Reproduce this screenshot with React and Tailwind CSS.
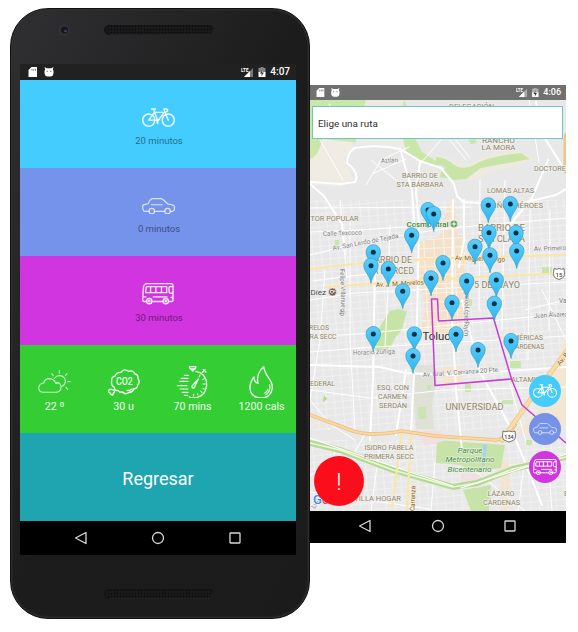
import React from "react";

const FONT = "font-[Roboto,'Noto_Sans',sans-serif]";

function Bike({ className }) {
  return (
    <svg viewBox="0 0 98 57" className={className} fill="none" stroke="currentColor" strokeWidth="4.300" strokeLinecap="round" strokeLinejoin="round">
      <circle cx="20" cy="36" r="18" />
      <circle cx="78" cy="36" r="18" />
      <path d="M28 3h12M34 3l13 36M37 13h29M37 13L20 36h26M66 13L46 40M78 36L65 3h9q5 4-1 8" />
      <path d="M46 36v9" strokeWidth="6" />
    </svg>
  );
}

function Car({ className }) {
  return (
    <svg viewBox="0 0 98 49" className={className} fill="none" stroke="currentColor" strokeWidth="3.600" strokeLinecap="round" strokeLinejoin="round">
      <path d="M20 40H8Q3 40 2 25q0-5 7-6l9-2 6-11q3-4 8-4h23q5 0 9 4l13 12q15 1 18 5 3 8 0 13-1 4-5 4h-5M38 40h29M28 20h32" />
      <circle cx="29" cy="39" r="8" />
      <circle cx="76" cy="39" r="8" />
    </svg>
  );
}

function Bus({ className }) {
  return (
    <svg viewBox="0 0 97 66" className={className} fill="none" stroke="currentColor" strokeWidth="4" strokeLinecap="round" strokeLinejoin="round">
      <path d="M14 56H6q-4 0-4-6l2-34Q5 2 16 2h72q6 0 6 6v44q0 4-4 4h-8M31 56h32M4 42h8M34 42h42M88 44h5" />
      <path d="M16 11h59v18H11l1-14q1-4 4-4zM26 11v18M42 11v18M59 11v18M93 11h-8q-3 0-3 4v10q0 6 5 6h6" />
      <circle cx="22" cy="55" r="8" />
      <circle cx="22" cy="55" r="2" />
      <circle cx="72" cy="55" r="8" />
      <circle cx="72" cy="55" r="2" />
    </svg>
  );
}

function Weather() {
  return (
    <svg viewBox="0 0 98 70" className="h-[23.3px] w-[32.7px] opacity-75" fill="none" stroke="currentColor" strokeWidth="3.400" strokeLinecap="round">
      <path d="M17 67q-15-1-15-14 1-12 15-14 3-13 17-13 13 1 18 11 14-1 17 12 1 16-14 18z" />
      <path d="M49 25q7-9 18-8 15 3 15 18-1 10-12 15M53 41q4-3 8-2" />
      <path d="M64 2v8M41 11l5 6M87 11l-5 6M89 35h8M84 52l5 6" />
    </svg>
  );
}

function Carbon() {
  return (
    <svg viewBox="0 0 98 84" className="h-[28px] w-[32.7px]" fill="none" stroke="currentColor" strokeWidth="4" strokeLinecap="round" strokeLinejoin="round">
      <path d="M22 58q-11-5-8-18-2-13 10-16 5-12 18-11 10-13 22-3 14-5 20 8 10 2 9 14 8 9-1 18 0 12-13 13-4 11-14 11-11 7-18-2-9 3-14-5-11 3-11-9z" />
      <path d="M60 67q9 2 14-4M66 73q12-1 14-9" />
      <path d="M5 67q5-5 10-2 10 0 7 8-4 3-5 8-8-2-8-7-6-1-4-7z" />
      <text x="52" y="50" textAnchor="middle" textLength="50" lengthAdjust="spacingAndGlyphs" fontSize="33" fontWeight="500" stroke="none" fill="currentColor">CO2</text>
    </svg>
  );
}

function Stopwatch() {
  return (
    <svg viewBox="0 0 92 98" className="h-[32.7px] w-[30.7px]" fill="none" stroke="currentColor" strokeWidth="4" strokeLinecap="round" strokeLinejoin="round">
      <path d="M57 16q31 6 32 39-2 38-39 41-8 0-13-3" />
      <path d="M37 2h20l-3 7H40zM43 10l4 5 5-5M76 19l8-7M79 11l8 7" />
      <path d="M22 28h12M12 37h21M8 46h25M2 59h28M9 69h24M16 79h17M22 88h10" strokeWidth="3.400" />
      <path d="M44 61l20-22-13 27q-6 1-7-5z" />
      <path d="M69 27l-3 5M84 54h-6M75 79l-4-4M50 90v-5M82 38l-5 3M83 70l-5-3M63 87l-2-4" strokeWidth="3" />
    </svg>
  );
}

function Flame() {
  return (
    <svg viewBox="0 0 74 98" className="h-[32.7px] w-[24.7px]" fill="none" stroke="currentColor" strokeWidth="4" strokeLinecap="round" strokeLinejoin="round">
      <path d="M44 2C48 34 72 40 70 66 67 86 55 96 36 96 17 96 3 84 3 65 3 49 8 42 15 33 14 44 19 49 27 52 22 31 31 12 44 2z" />
      <path d="M62 56q4 21-12 30M56 70q-2 9-9 11" strokeWidth="3.400" />
    </svg>
  );
}

function StatusBar({ time, className, timeClass, iconClass, signalClass }) {
  return (
    <div className={`flex items-center text-white ${className}`}>
      <svg viewBox="0 0 26 12" className={iconClass} fill="currentColor">
        <path d="M3.500 1H9v10H.5V4z" />
        <path d="M4 2.800v2M5.800 2.800v2M7.500 2.800v2" stroke="#555" strokeWidth=".7" />
        <path d="M17.200 3.500L16.500 1l2.200 1.200h4.600L25.500 1l-.7 2.500q1.200 1 .7 3.500-.4 3.500-3 3.500h-3q-2.500 0-3-3.500-.4-2.500.7-3.500z" />
        <path d="M18.700 5.300h1M22.300 5.300h1" stroke="#444" strokeWidth="1" />
      </svg>
      <div className="grow" />
      <svg viewBox="0 0 25 12" className={signalClass} fill="currentColor">
        <path d="M12 2v9H3z" opacity=".4" />
        <path d="M9 5v6H3z" />
        <text x="0" y="5.500" fontSize="5.500" fontWeight="700" textLength="7.500" lengthAdjust="spacingAndGlyphs">LTE</text>
        <path d="M17.500 2H19.500V1h3v1H24.500v5h-7z" opacity=".45" />
        <path d="M17.500 6h2l2-1.500v1.500h3v5h-7z" />
        <path d="M21.500 3.500l-2.500 4h1.800L20.300 10.500l2.500-4h-1.800z" fill="#333" />
      </svg>
      <span className={`font-medium leading-none ${timeClass}`}>{time}</span>
    </div>
  );
}

function NavBar({ className }) {
  return (
    <div className={`flex items-center justify-between bg-black text-[#d8d8d8] ${className}`}>
      <svg viewBox="0 0 14 14" className="size-[14px]" fill="none" stroke="currentColor" strokeWidth="1.300" strokeLinejoin="round"><path d="M12 1.500v11L1.500 7z" /></svg>
      <svg viewBox="0 0 14 14" className="size-[14px]" fill="none" stroke="currentColor" strokeWidth="1.300"><circle cx="7" cy="7" r="5.500" /></svg>
      <svg viewBox="0 0 14 14" className="size-[14px]" fill="none" stroke="currentColor" strokeWidth="1.300"><rect x="2" y="2" width="10" height="10" rx=".5" /></svg>
    </div>
  );
}

function Speaker() {
  return (
    <svg viewBox="0 0 110 10" className="h-[10px] w-[110px]">
      <defs>
        <pattern id="mesh" width="3" height="3" patternUnits="userSpaceOnUse">
          <rect width="3" height="3" fill="#1b1b1b" />
          <circle cx="1.500" cy="1.500" r=".9" fill="#0c0c0c" />
        </pattern>
      </defs>
      <rect x=".5" y=".5" width="109" height="9" rx="4.500" fill="url(#mesh)" stroke="#141414" />
      <path d="M6 9.700h98q5-1 5.500-5" fill="none" stroke="#3a3a3a" strokeWidth=".5" />
    </svg>
  );
}

function Mode({ color, icon, label }) {
  return (
    <div className={`flex h-[88px] flex-col items-center justify-end pb-[21px] ${color}`}>
      {icon}
      <span className="mt-[8px] pl-[2px] text-[9.500px] leading-[12px] text-black/50">{label}</span>
    </div>
  );
}

function Stat({ icon, label }) {
  return (
    <div className="flex w-1/4 flex-col items-center text-[#f0fff0]">
      <div className="flex h-[34px] items-center justify-center">{icon}</div>
      <span className="mt-px text-[10.700px] leading-[14px]">{label}</span>
    </div>
  );
}

const pins = [
  [428, 210], [433.7, 214], [510.3, 204], [488.3, 205.3], [489, 232.7], [516, 233], [411.7, 235.300],
  [475, 246.700], [516.7, 251], [373.3, 252.300], [490, 255.300], [443, 263], [371, 265.700], [388.3, 269],
  [431, 278.300], [496.3, 280], [466.7, 281], [402.7, 291.300], [452, 302.700], [494.3, 303.700],
  [373.3, 334], [414.3, 334.300], [456, 334.300], [511, 341], [478, 350], [413, 356],
];

const places = [
  ["DELEGACIÓN", 449, 109, 45], ["RANCHO", 482, 142.500, 33], ["LA MORA", 481.500, 150.300, 34],
  ["DOCTORES", 534, 170.500, 36], ["BARRIO DE", 402, 178, 36], ["STA BÁRBARA", 396.500, 187, 47],
  ["LOMAS ALTAS", 487, 193, 47], ["NIÑOS HÉROES", 489, 207.500, 54], ["TOR POPULAR", 310.500, 221, 48],
  ["RELOS", 309, 330, 20], ["RA SECC", 309.500, 338.700, 27], ["EDERAL", 310, 386, 25],
  ["ESQ. CON", 377, 390.300, 32], ["CARMEN", 378, 399, 29], ["SERDÁN", 379, 407.700, 28],
  ["MÉRICAS", 513, 340, 30], ["CÁRDENAS", 511, 348.500, 33], ["ALTAMIRANO", 511, 381.500, 44],
  ["ISIDRO FABELA", 364.500, 450, 49], ["PRIMERA SECC", 364, 458.700, 50], ["VILLA HOGAR", 354, 500.500, 47],
  ["LÁZARO", 487.500, 496, 27], ["CÁRDENAS", 483, 504.700, 37], ["E", 564, 496, 4],
];

const bigPlaces = [
  ["BARRIO DE", 478, 230.500, 47], ["STA CLARA", 478, 241.500, 47], ["BARRIO DE", 369, 262.500, 43],
  ["LA MERCED", 368, 273.500, 46], ["5 DE MAYO", 474, 288, 46], ["UNIVERSIDAD", 445.500, 409.500, 58],
];

function CityMap() {
  return (
    <svg viewBox="310 100 256 411" className="block h-[411px] w-[256px]">
      <defs>
        <pattern id="blocks" width="17" height="13" patternUnits="userSpaceOnUse" patternTransform="rotate(-5)">
          <path d="M0 .5h17M0 7h17M.5 0v13M9 0v13" stroke="#f4f4f4" strokeWidth=".7" />
        </pattern>
        <pattern id="downtown" width="10" height="9" patternUnits="userSpaceOnUse" patternTransform="rotate(-3)">
          <path d="M0 .5h10M.5 0v9" stroke="#fbf2e6" strokeWidth="1" />
        </pattern>
        <linearGradient id="pin" x2="0" y2="1">
          <stop stopColor="#5ccdfa" />
          <stop offset="1" stopColor="#2ab6ef" />
        </linearGradient>
        <g id="marker">
          <path d="M0 17.500C-1.300 8.500-7.200 6.500-7.200-.4A7.200 7.200 0 0 1 7.200-.4C7.200 6.500 1.300 8.500 0 17.500z" fill="url(#pin)" stroke="#3c9cc4" strokeWidth=".7" />
          <circle r="2.500" fill="#07324a" />
        </g>
      </defs>
      <rect x="310" y="100" width="256" height="411" fill="#e8e8e8" />
      <path d="M310 200h256v230H310zM310 440h256v71H310z" fill="url(#blocks)" />
      <path d="M318 139h30l8 12-13 6 10 22-12 8-31-2V157z" fill="#f0ece3" />
      <path d="M310 100h94l5 10 30 20-29 12H354l-32-3q-3 17-12 20z" fill="#c9e7a8" />
      <path d="M366 100h38l-2 8h-38z" fill="#ece9e1" />
      <path d="M356 139h50l1 16-18-8-33-2z" fill="#ebebe8" />
      <path d="M403 139h12l7 13 14 9 9 3-9 2-15-5-15-10z" fill="#c9e7a8" />
      <path d="M436 153l19 7 10 5 26-11 30-3 14 9-21 7-23 4-19 10-19-2-3-5 2-5-16-9z" fill="#efeadf" />
      <path d="M436 157q9 0 18 8 8 6 20 0 15-9 47-12l9 6-22 4-27 5-15 11-12 1-14-3 1-5 5-4-10-5z" fill="#c8e4a6" />
      <path d="M468 140l7-1 2 4-6 1zM335 240h4v6h-4zM542 267h10v7h-10zM510 361h11v7h-11zM466 299h6v7h-6zM465 384h6v8h-6zM503 400h10v4h-13zM526 440h6v5h-6z" fill="#c9e5ab" />
      <path d="M390 311l8-2 9 2-3 11-3 9-6 7-4 8-7 6-8-1-5-2 5-8 3-13z" fill="#c7e4a7" />
      <path d="M418 243l10-4h8l7-8 4-26h8l3 30h5l-1 14 5 6-3 22 3 16-3 24-5 18-17-2-12 4-9-9 4-19-3-20-5-13z" fill="#f4e1cb" />
      <path d="M418 243l10-4h8l7-8 4-26h8l3 30h5l-1 14 5 6-3 22 3 16-3 24-5 18-17-2-12 4-9-9 4-19-3-20-5-13z" fill="url(#downtown)" />
      <path d="M414 365h20l3 15-5 24 2 25h-18l-2-28z" fill="#dfe0d6" />
      <path d="M418 407h8v12h-8zM427 385h4v5h-4z" fill="#cce3b4" />
      <path d="M438 368l23-2 2 17-18 5zM501 462h8v49h-8z" fill="#f4e4d0" />
      <path d="M566 335v88l-15 18-35-9 25-25z" fill="#f3e6d2" />
      <path d="M437 440l68 5-4 23-31 3-9-6-25-2zM463 490l28-5-2 26h-18z" fill="#c7e3a7" />
      <path d="M483 444l4 1-2 20-3 1z" fill="#a9d3ec" />
      <path d="M324 395l3 4-4 3z" fill="#aadd7c" />
      <path d="M417 431h24l3 10-19 5zM460 474h23l-5 14-16-2z" fill="#f1dfe2" />
      <g fill="none" stroke="#fff" strokeLinecap="round" strokeLinejoin="round">
        <path strokeWidth="2" d="M310 182l31 2 14-2q5-9-8-19 0-9 7-15 25-4 46 1l20 12 21 7 13 16 3 12 6 6 51 3 42-10 10-6M310 184l14 12 18 28 3 30M400 148l6 22 6 20 3 45M420 162l-4 30 3 32-2 96-3 55-3 56M310 365l70 2 25 6 45 2 116-8M406 370l-10 65M375 260l-2 120-3 60M453 200l-1 120 4 70 6 60M462 300l17 70 33 60 30 75M536 102l8 35 22 35M548 160l-16 38-27 33M464 200v40l-5 27" />
        <path strokeWidth="1" d="M310 255l60-15 80-12 116-10M310 232l50-2 75-5M313 281l36-5 30-3M310 300l45-7 211-11M310 337l60-4 200-20M310 352l65-5 191-11M310 390l60 8 75-8 121-3M325 270l-5 70-10 60M350 220v120l5 90M340 200l7 80M390 225l-2 65-3 57M480 180l-1 130M505 180l-3 150M530 210l-2 150M550 210l-1 120M310 400l20 24 25 16M310 475l45-23 10-18M335 448l-5 40M310 492l120 17M380 445l-9 66M435 462l-4 49M529 100l10 62M320 140l23 40M329 104l20 31M310 208l160-1M366 185l15-25 28-13M371 160l35 28M372 174l34-15M430 106l25 30M441 140l-22 25M450 140l16 20M456 140l14 18" />
        <path strokeWidth="1" d="M525 458l-7 53M548 458l4 53M475 471l50 40M510 384l16 58M542 290l24 50M525 310l41-10" />
      </g>
      <g fill="none" strokeLinecap="round">
        <path d="M310 443l30 7 53 20 60 17 24-4 36-14 53-12" stroke="#b5d991" strokeWidth="6" />
        <path d="M310 443l30 7 53 20 60 17 24-4 36-14 53-12" stroke="#edf8df" strokeWidth="1.500" />
        <path d="M310 438l40 14 60 20 43 14M461 488l105-34" stroke="#fff" strokeWidth="1.200" />
        <path d="M310 269l52-6 83-5 121-3M325 287l75-5 60-4 106-5M402 432l-10 75M411 433l-4 78" stroke="#fbe6a8" strokeWidth="2.200" />
        <path d="M566 135v37M310 415l43 16q18 6 49 0l33 5 61 4q10-1 19-15" stroke="#efbb78" strokeWidth="3.500" />
        <path d="M310 415l43 16q18 6 49 0l33 5 61 4q10-1 19-15" stroke="#f9d9a0" strokeWidth="2" />
        <path d="M502 440l31-44 34-45M566 140v30" stroke="#edc584" strokeWidth="5" />
        <path d="M502 440l31-44 34-45" stroke="#f7dda8" strokeWidth="3.500" />
      </g>
      <g fontSize="7.500" fill="#908466" stroke="#f1f1ef" strokeWidth="1.500" paintOrder="stroke">
        {places.map(([t, x, y, w]) => <text key={t + y} x={x} y={y} textLength={w} lengthAdjust="spacingAndGlyphs">{t}</text>)}
      </g>
      <g fontSize="9.500" fill="#908466" stroke="#f1f1ef" strokeWidth="1.500" paintOrder="stroke">
        {bigPlaces.map(([t, x, y, w]) => <text key={t + y} x={x} y={y} textLength={w} lengthAdjust="spacingAndGlyphs">{t}</text>)}
      </g>
      <g fontSize="6.500" fill="#7d7d7d" stroke="#f3f3f3" strokeWidth="1.200" paintOrder="stroke">
        <text x="381" y="163" textLength="17" transform="rotate(-3 381 163)">Aztlán</text>
        <text x="323" y="236" textLength="39" transform="rotate(-2 323 236)">Calle Texcoco</text>
        <text x="333" y="250.500" textLength="67" transform="rotate(-11 333 250.500)">Av. San Lerdo de Tejada</text>
        <text x="340" y="269" textLength="45" transform="rotate(88 340 269)">Felipe Villanueva</text>
        <text x="353" y="355" textLength="42" transform="rotate(-2 353 355)">Horacio Zúñiga</text>
        <text x="423" y="377" textLength="77" transform="rotate(-4 423 377)">Av. Gral. V. Carranza 20 Pte.</text>
        <text x="534" y="251" textLength="32" lengthAdjust="spacingAndGlyphs" transform="rotate(-2 534 251)">Av. Primero</text>
        <text x="534" y="318" textLength="34" transform="rotate(-3 534 318)">Juan Álvarez</text>
        <text x="559" y="303">Va</text>
        <text x="465" y="290" textLength="46" transform="rotate(91 465 290)">Ignacio López Rayón</text>
        <text x="344" y="316" transform="rotate(-90 344 316)">de</text>
        <text x="315" y="509" transform="rotate(-65 315 509)">Luis</text>
      </g>
      <g fontSize="6.500" fill="#805438" stroke="#fdf0cc" strokeWidth="1.200" paintOrder="stroke">
        <text x="455" y="260" textLength="50" transform="rotate(2 455 260)">Av. Miguel Hidalgo</text>
        <text x="376" y="287" textLength="48" transform="rotate(-3 376 287)">Av. J. M. Morelos</text>
        <text x="414.500" y="511" textLength="25" transform="rotate(-88 414.500 511)">Carranza</text>
        <text x="560" y="366" transform="rotate(-52 560 366)">Av. B</text>
      </g>
      <g fill="#3d8a37" stroke="#f4f4ec" strokeWidth="1.200" paintOrder="stroke">
        <text x="406.500" y="227" fontSize="8" fontWeight="500" textLength="42">Cosmovitral</text>
        <g fontSize="8" fontStyle="italic" textAnchor="middle">
          <text x="470" y="452.500" textLength="25" lengthAdjust="spacingAndGlyphs">Parque</text>
          <text x="470" y="462" textLength="49" lengthAdjust="spacingAndGlyphs">Metropolitano</text>
          <text x="469.500" y="471.500" textLength="44" lengthAdjust="spacingAndGlyphs">Bicentenario</text>
        </g>
      </g>
      <circle cx="454" cy="224" r="3.800" fill="#589b4f" stroke="#fff" strokeWidth=".6" />
      <path d="M454 221.500v5M451.500 224h5" stroke="#fff" />
      <text x="310.500" y="295" fontSize="8" fill="#444" stroke="#eee" strokeWidth="1" paintOrder="stroke" textLength="15.500">Díez</text>
      <circle cx="332.500" cy="292" r="4" fill="#7a5a50" stroke="#fff" strokeWidth=".6" />
      <path d="M330.500 290.500h3v2q-1.500 2-3 0zM334 291h1v1" fill="none" stroke="#fff" strokeWidth=".8" />
      <text x="422.500" y="340" fontSize="11" fill="#333" stroke="#f4ece0" strokeWidth="1.500" paintOrder="stroke" textLength="34" lengthAdjust="spacingAndGlyphs">Toluca</text>
      <g fontSize="6" fontWeight="500" textAnchor="middle">
        <path d="M554 268.500q2.500 1.500 5 0 2.500 1.500 5 0 1 6 0 8-1 1.500-5 3-4-1.500-5-3-1-2 0-8z" fill="#fff" stroke="#555" strokeWidth=".8" />
        <text x="559" y="276.500" fill="#444">15</text>
        <path d="M503 431q2.500 1.500 6 0 3.500 1.500 6 0 1 6 0 8-1 1.500-6 3-5-1.500-6-3-1-2 0-8z" fill="#fff" stroke="#555" strokeWidth=".8" />
        <text x="509" y="438.500" fill="#444" fontSize="5.500">134</text>
      </g>
      <path d="M438.500 321l-1-22h-6l3.500 86.500 76.500-6.500-18-61-55 3M511.500 379l10.500 26 44 38" fill="none" stroke="#c83bd6" strokeWidth="1.500" strokeLinejoin="round" />
      {pins.map(([x, y]) => <use key={`${x}-${y}`} href="#marker" x={x} y={y} />)}
      <text x="313" y="504" fontSize="13" fontWeight="500" fill="#4285f4" stroke="#fff" strokeWidth="1.500" paintOrder="stroke">G</text>
      <text x="322" y="504" fontSize="12" fill="#ea4335">o</text>
    </svg>
  );
}

function MapPhone() {
  return (
    <section className="mt-[85px] flex h-[458px] w-[256px] flex-col">
      <StatusBar time="4:06" className="h-[15px] bg-[#707070] pr-[5px] pl-[6px]" timeClass="text-[9px] ml-[4px]" iconClass="h-[11px] w-[24px]" signalClass="h-[11px] w-[23px]" />
      <div className="relative h-[411px]">
        <CityMap />
        <div className="absolute top-[6px] left-[2px] flex h-[33px] w-[251px] items-center border border-[#6fc4c5] bg-white pt-[3px] pl-[5px] text-[9.900px] text-[#303030]">Elige una ruta</div>
        <div className="absolute right-[5px] bottom-[28px] flex flex-col gap-[6px] text-white">
          <button className="flex size-[32px] items-center justify-center rounded-full bg-[#44ccff]"><Bike className="w-[24px]" /></button>
          <button className="flex size-[32px] items-center justify-center rounded-full bg-[#7592e9]"><Car className="w-[24px] opacity-75" /></button>
          <button className="flex size-[32px] items-center justify-center rounded-full bg-[#d035e0]"><Bus className="w-[24px]" /></button>
        </div>
        <button className="absolute bottom-[5px] left-[4px] flex size-[50px] items-center justify-center rounded-full bg-[#fc0d1b] pt-[2px] text-[24px] leading-none font-light text-white">!</button>
      </div>
      <NavBar className="h-[32px] pr-[49px] pl-[48px] pb-[2px]" />
    </section>
  );
}

function TripPhone() {
  return (
    <section className="mt-[8px] ml-[10px] flex h-[611px] w-[300px] flex-col rounded-[38px] border border-[#111] bg-linear-to-br from-[#302f31] via-[#1d1c1d] to-[#1b1b1b] pl-[9px] shadow-[inset_0_0_2px_1px_#333333]">
      <div className="flex h-[55px] items-start">
        <svg viewBox="0 0 14 14" className="mt-[14px] ml-[37px] size-[14px]">
          <circle cx="7" cy="7" r="5.500" fill="#343236" />
          <circle cx="7.500" cy="7" r="3.500" fill="#171520" />
          <circle cx="8.500" cy="8" r="1.300" fill="#51425b" />
        </svg>
        <div className="mt-[16px] ml-[33px]"><Speaker /></div>
      </div>
      <div className="w-[276px]">
        <StatusBar time="4:07" className="h-[16px] bg-[#212121] pr-[6px] pl-[8px]" timeClass="text-[10px] ml-[4px]" iconClass="h-[12px] w-[26px]" signalClass="h-[12px] w-[25px]" />
        <Mode color="bg-[#44ccff]" label="20 minutos" icon={<Bike className="w-[33px] text-white/90" />} />
        <Mode color="bg-[#7593ea]" label="0 minutos" icon={<Car className="mb-[1px] w-[33px] text-white/75" />} />
        <div className="bg-[#d035e0] pt-px"><Mode color="bg-[#d035e0]" label="30 minutos" icon={<Bus className="-mb-[1px] w-[32px] text-white/90" />} /></div>
        <div className="flex h-[88px] bg-[#34cd33] pt-[20px]">
          <Stat icon={<Weather />} label="22 º" />
          <Stat icon={<Carbon />} label="30 u" />
          <Stat icon={<Stopwatch />} label="70 mins" />
          <Stat icon={<Flame />} label="1200 cals" />
        </div>
        <div className="flex h-[88px] items-center justify-center bg-[#1ea5af] pt-[2px] text-[18px] text-white">Regresar</div>
        <NavBar className="h-[34px] px-[54px]" />
      </div>
      <div className="mt-[34px] ml-[84px]"><Speaker /></div>
    </section>
  );
}

export default function App() {
  return (
    <main className={`flex h-[632px] w-[578px] items-start overflow-hidden bg-white ${FONT}`}>
      <TripPhone />
      <MapPhone />
    </main>
  );
}
